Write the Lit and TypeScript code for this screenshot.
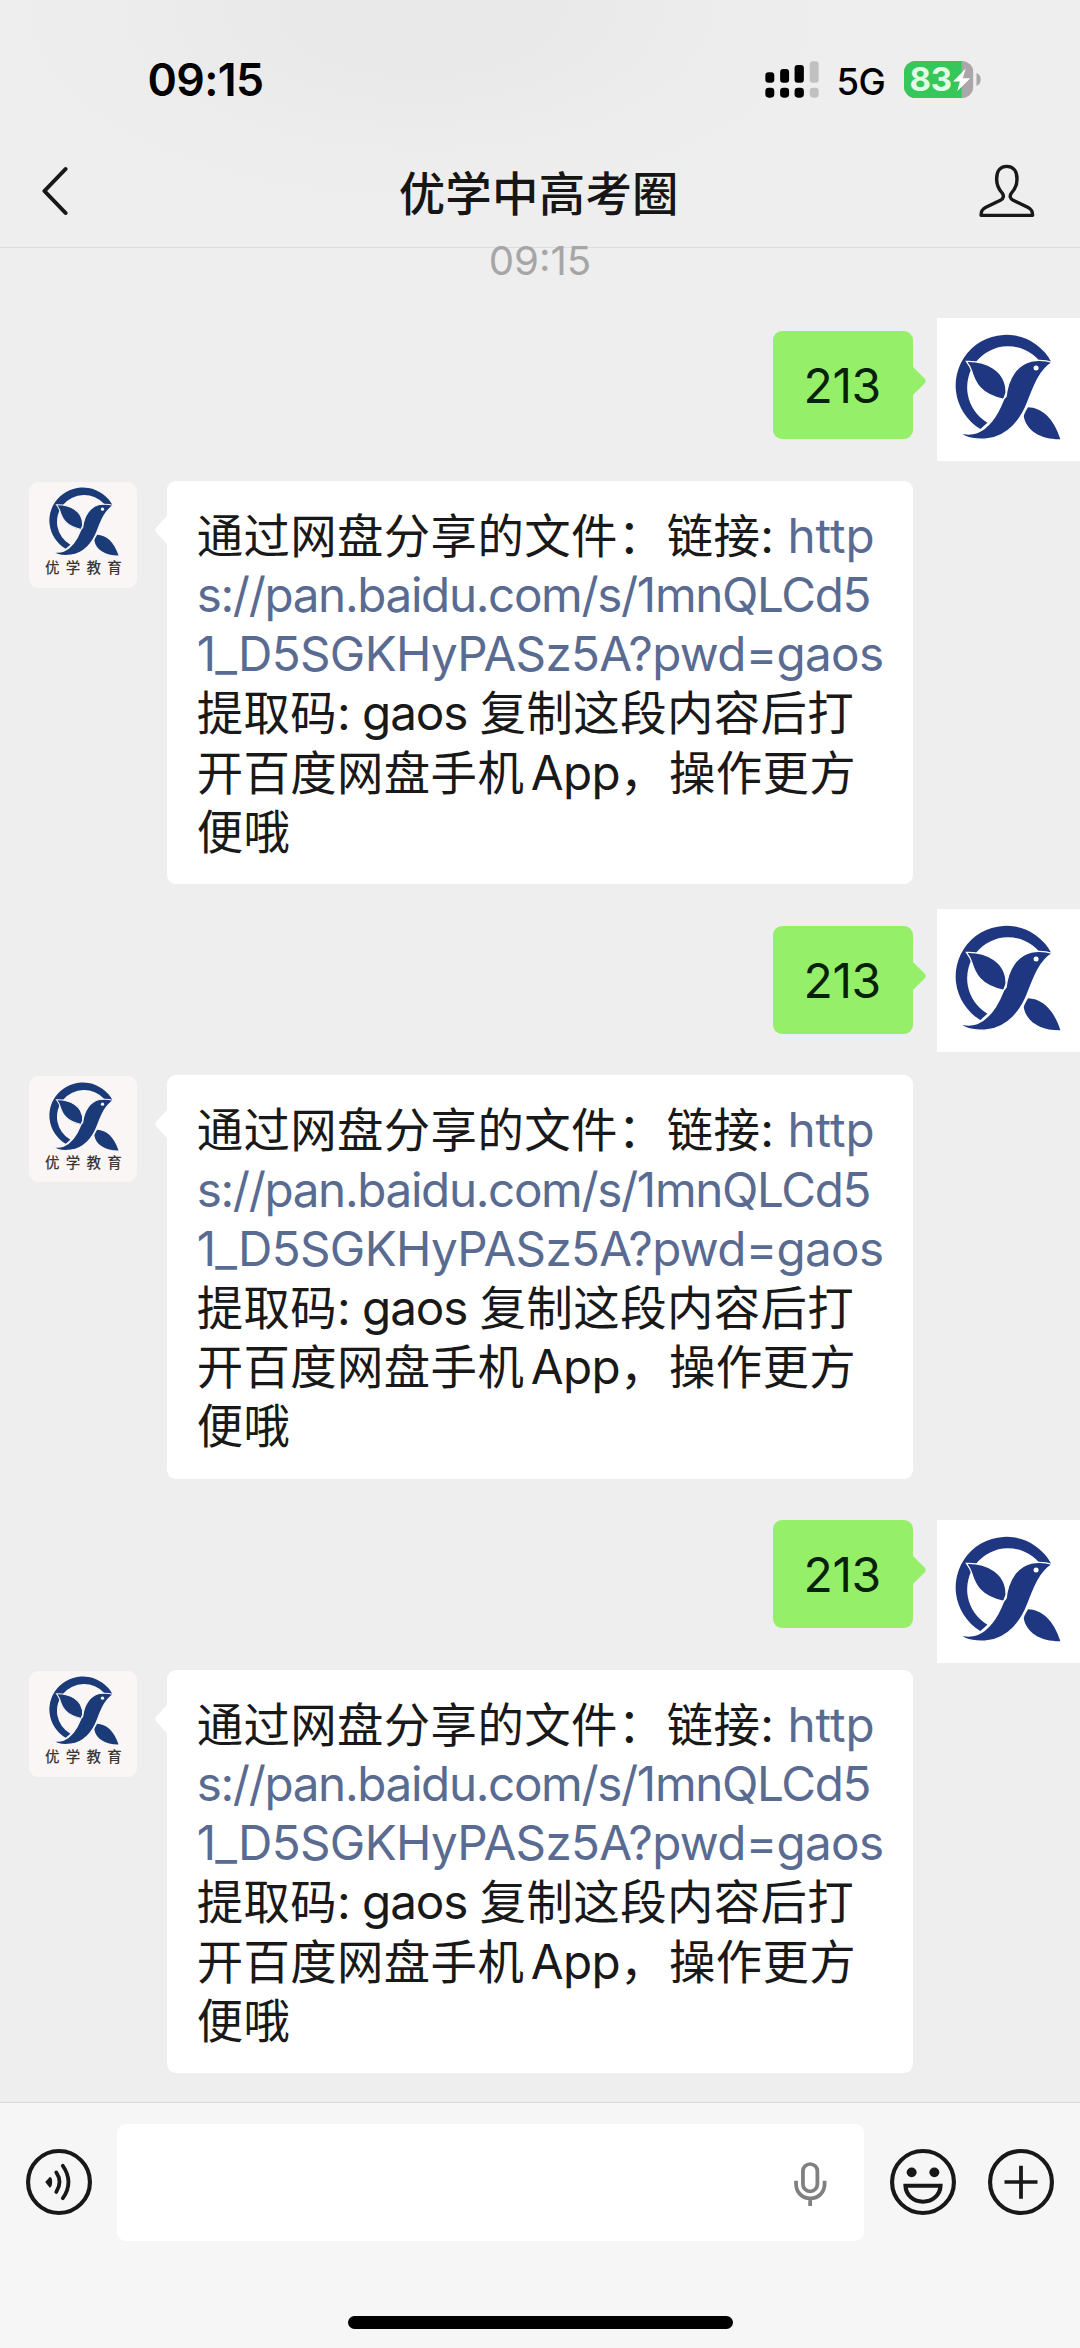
import { LitElement, html, css, svg } from "lit";
import { customElement, property } from "lit/decorators.js";

const birdLogo = svg`
  <path d="M365 158A152 152 0 1 0 152 358L173 339A123 123 0 1 1 327 151Z"/>
  <path class="cut" d="M110 155C168 153 231 182 229 250L222 269C150 253 136 218 125 182C122 172 118 166 110 155Z"/>
  <path class="cut" d="M368 158C345 151 325 151 305 154C262 164 235 205 229 260L221 270C200 325 172 356 142 369C125 375 105 374 88 369C110 386 145 392 175 387C235 379 275 330 295 275C311 235 327 184 368 158Z"/>
  <path d="M295 293C335 294 372 325 392 389C335 390 290 365 282 320C285 308 290 302 295 293Z"/>
  <circle cx="319" cy="175" r="7.5" fill="#fff"/>`;

@customElement("status-bar")
class StatusBar extends LitElement {
  static styles = css`
    :host { display: flex; align-items: center; height: 135px; padding: 23px 99px 0 147.5px; box-sizing: border-box; color: #000; font-family: Inter, sans-serif; }
    .time { font-size: 44.6px; font-weight: 600; line-height: 60px; letter-spacing: -0.6px; flex: 1; margin-top: 2px; }
    .signal { width: 54px; height: 37px; margin-right: 18px; }
    .net { font-size: 36.5px; line-height: 40px; font-weight: 450; letter-spacing: -0.7px; margin: 5px 19px 0 0; }
    .batt { display: grid; width: 77px; height: 37px; }
    .batt > * { grid-area: 1 / 1; }
    .pct { font-size: 33px; font-weight: 700; line-height: 36.5px; color: #e2fde6; padding-left: 5.5px; letter-spacing: -0.3px; }
    svg { display: block; }
  `;
  render() {
    return html`
      <div class="time">09:15</div>
      <svg class="signal" viewBox="657 182 157 112" preserveAspectRatio="none">
        <rect x="658" y="216" width="26" height="32" rx="9"/><rect x="701" y="206" width="26" height="42" rx="9"/>
        <rect x="743" y="194" width="27" height="54" rx="9"/><rect x="787" y="183" width="26" height="65" rx="9" fill="#c1c1c1"/>
        <rect x="658" y="263" width="26" height="30" rx="10"/><rect x="701" y="263" width="26" height="30" rx="10"/>
        <rect x="743" y="263" width="27" height="30" rx="10"/><rect x="787" y="263" width="26" height="30" rx="10" fill="#c1c1c1"/>
      </svg>
      <div class="net">5G</div>
      <div class="batt">
        <svg viewBox="1057 182 223 110" width="77" height="37" preserveAspectRatio="none">
          <defs><clipPath id="b"><rect x="1057" y="182" width="201" height="110" rx="34"/></clipPath></defs>
          <g clip-path="url(#b)"><path fill="#aaa6aa" d="M1057 182h201v110h-201z"/><path fill="#35c759" d="M1057 182h167v110h-167z"/></g>
          <path fill="#aaa6aa" d="M1267 218C1283 222 1283 252 1267 256Z"/>
          <path fill="#fff" d="M1236 204L1199 243H1219L1211 272L1249 233H1227Z"/>
        </svg>
        <span class="pct">83</span>
      </div>`;
  }
}

@customElement("nav-bar")
class NavBar extends LitElement {
  static styles = css`
    :host { display: flex; align-items: center; justify-content: space-between; height: 112.5px; padding: 0 45.5px 0 41px; border-bottom: 1.5px solid #dcdcdc; box-sizing: border-box; }
    .title { font: 500 46.4px/60px "Noto Sans CJK SC", sans-serif; letter-spacing: 0.3px; color: #161616; padding-left: 30px; }
    svg { display: block; fill: none; stroke: #181818; }
  `;
  render() {
    return html`
      <svg width="28" height="50" viewBox="118 501 82 150" preserveAspectRatio="none" stroke-width="12" stroke-linecap="round" stroke-linejoin="round"><path d="M190 510L128 576L190 642"/></svg>
      <div class="title">优学中高考圈</div>
      <svg width="56" height="54" viewBox="1274 495 162 162" preserveAspectRatio="none" stroke-width="10" stroke-linejoin="round">
        <path d="M1354 502C1334 502 1325 518 1325 540C1325 562 1333 573 1341 582C1347 590 1345 599 1336 604L1294 625C1283 631 1280 636 1280 649H1429C1429 636 1426 631 1415 625L1373 604C1363 599 1362 590 1368 582C1376 573 1384 562 1384 540C1384 518 1375 502 1354 502Z"/>
      </svg>`;
  }
}

@customElement("sent-message")
class SentMessage extends LitElement {
  @property() text = "";
  static styles = css`
    :host { display: flex; align-items: flex-start; justify-content: flex-end; height: 149.4px; }
    .bubble { width: 140px; height: 108px; border-radius: 9px; background: #95ef69; font: 48px/109px Inter, sans-serif; text-align: center; color: #07210a; letter-spacing: -0.3px; padding-right: 2px; box-sizing: border-box; }
    .tail { width: 13px; height: 28px; margin: 36px 11px 0 0; display: block; }
    .avatar { display: block; width: 142.8px; height: 143px; margin-top: var(--lift, 0); background: #fff; fill: #1f3680; }
    .cut { stroke: #fff; stroke-width: 4; }
  `;
  render() {
    return html`
      <div class="bubble">${this.text}</div>
      <svg class="tail" viewBox="0 0 13 28"><path fill="#95ef69" d="M0 0L11.6 11.5Q13.6 14 11.6 16.5L0 28Z"/></svg>
      <svg class="avatar" viewBox="22 25 428 429">${birdLogo}</svg>`;
  }
}

@customElement("received-message")
class ReceivedMessage extends LitElement {
  static styles = css`
    :host { display: flex; align-items: flex-start; height: 445.1px; padding-left: 29.3px; }
    .avatar { width: 107.4px; height: 106px; border-radius: 9px; background: #fbf6f6; display: flex; flex-direction: column; align-items: center; margin-top: 1px; }
    .logo { display: block; width: 70px; height: 69px; margin: 5.5px 0 0 2px; fill: #1b3a78; }
    .cut { stroke: #fbf6f6; stroke-width: 5; }
    .brand { font: 500 14.5px/20px "Noto Sans CJK SC", sans-serif; letter-spacing: 6.3px; padding-left: 7px; margin-top: 1px; color: #3a3636; white-space: nowrap; }
    .tail { width: 12px; height: 28px; margin: 35px 0 0 18.2px; display: block; }
    .bubble { width: 746.6px; height: 403.6px; box-sizing: border-box; border-radius: 9px; background: #fff; padding: 25.3px 0 0 29.8px; color: #191919; }
    .line { font: 47.6px/59.15px Inter, "Noto Sans CJK SC", sans-serif; height: 59.15px; white-space: pre; }
    .han { font-size: 46.4px; letter-spacing: 0.4px; line-height: 1; }
    .stop { font-size: 46.4px; letter-spacing: 2.5px; line-height: 1; }
    .link { color: #5a6b92; }
    .code { letter-spacing: -1.05px; }
    .app { letter-spacing: -0.6px; margin-left: 6.5px; }
    .path { letter-spacing: -1.34px; }
    .query { letter-spacing: -0.67px; }
  `;
  render() {
    return html`
      <div class="avatar">
        <svg class="logo" viewBox="76 73 318 318" preserveAspectRatio="none">${birdLogo}</svg>
        <div class="brand">优学教育</div>
      </div>
      <svg class="tail" viewBox="0 0 12 28"><path fill="#fff" d="M12 0L1.4 11.5Q-.6 14 1.4 16.5L12 28Z"/></svg>
      <div class="bubble">
        <div class="line"><span class="han">通过网盘分享的文件</span><span class="stop">：</span><span class="han">链接</span>: <span class="link">http</span></div>
        <div class="line link path">s://pan.baidu.com/s/1mnQLCd5</div>
        <div class="line link query">1_D5SGKHyPASz5A?pwd=gaos</div>
        <div class="line"><span class="han">提取码</span><span class="code">: gaos </span><span class="han">复制这段内容后打</span></div>
        <div class="line"><span class="han">开百度网盘手机</span><span class="app">App</span><span class="stop">，</span><span class="han">操作更方</span></div>
        <div class="line"><span class="han">便哦</span></div>
      </div>`;
  }
}

@customElement("input-bar")
class InputBar extends LitElement {
  static styles = css`
    :host { display: flex; flex-direction: column; align-items: center; height: 246px; box-sizing: border-box; background: #f6f6f6; border-top: 1px solid #d9d9d9; padding-top: 21px; }
    .row { display: flex; align-items: center; align-self: stretch; padding: 0 26px; height: 116.6px; }
    .field { flex: 1; height: 116.6px; margin: 0 26px 0 25px; border-radius: 9px; background: #fff; display: flex; align-items: center; justify-content: flex-end; padding-right: 37px; box-sizing: border-box; }
    .home { width: 385px; height: 12.5px; border-radius: 7px; background: #000; margin-top: 75.5px; }
    svg { display: block; fill: none; stroke: #181818; }
    .round { width: 66px; height: 66px; }
    .last { margin-left: 32px; }
    .solid { fill: #181818; stroke: none; }
    .mic { stroke: #808080; margin-top: 3px; }
  `;
  render() {
    return html`
      <div class="row">
        <svg class="round" viewBox="75 208 192 198" preserveAspectRatio="none" stroke-width="12">
          <ellipse cx="171" cy="307" rx="90" ry="93"/>
          <path class="solid" d="M131 307L144 292Q151 292 151 307Q151 322 144 324Z"/>
          <path stroke-linecap="round" stroke-width="11" d="M163 278Q182 307 163 337M182 258Q215 307 182 356"/>
        </svg>
        <div class="field">
          <svg class="mic" width="33" height="44" viewBox="737 245 96 132" preserveAspectRatio="none" stroke-width="11">
            <rect x="763" y="251" width="42" height="82" rx="21"/>
            <path d="M743 301V310C743 337 761 354 784.500 354S826 337 826 310V301M784 354V377"/>
          </svg>
        </div>
        <svg class="round" viewBox="1016 208 192 198" preserveAspectRatio="none" stroke-width="12">
          <ellipse cx="1112" cy="307" rx="90" ry="93"/>
          <circle class="solid" cx="1079" cy="278" r="14.5"/><circle class="solid" cx="1145" cy="278" r="14.5"/>
          <path d="M1061 318H1163C1162 347 1139 366 1112 366S1062 347 1061 318Z"/>
        </svg>
        <svg class="round last" viewBox="1301 208 192 198" preserveAspectRatio="none" stroke-width="12">
          <ellipse cx="1397" cy="307" rx="90" ry="93"/>
          <path stroke-width="11" d="M1349 307H1445M1397 258V357"/>
        </svg>
      </div>
      <div class="home"></div>`;
  }
}

@customElement("app-root")
class AppRoot extends LitElement {
  static styles = css`
    :host { display: flex; flex-direction: column; width: 1080px; height: 2348px; overflow: hidden; background: #eee; }
    header { height: 247.5px; background: radial-gradient(ellipse 400px 190px at 420px 10px, #e9e9e9 30%, #eee 100%); }
    .chat { flex: 1; min-height: 0; }
    .stamp { font: 40.2px/40px Inter, sans-serif; color: #a6a6a6; text-align: center; height: 90.3px; margin-top: -6.5px; }
    .first { --lift: -13.3px; }
    .second { --lift: -17px; }
    .third { --lift: 0px; }
  `;
  render() {
    return html`
      <header><status-bar></status-bar><nav-bar></nav-bar></header>
      <main class="chat">
        <div class="stamp">09:15</div>
        ${["first", "second", "third"].map(
          (slot) => html`<sent-message class=${slot} text="213"></sent-message><received-message></received-message>`
        )}
      </main>
      <input-bar></input-bar>`;
  }
}
